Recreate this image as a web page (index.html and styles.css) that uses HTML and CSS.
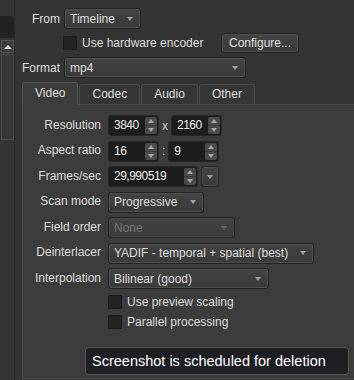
FILE: index.html
```html
<!DOCTYPE html>
<html lang="en">
<head>
  <meta charset="UTF-8" />
  <title>Render Settings</title>
  <link rel="stylesheet" href="styles.css">
</head>
<body>
  <div class="window">
    <div class="sidebar">
      <div class="sb-box"></div>
      <div class="scrollbar">
        <div class="sb-up"><i class="tri-up"></i></div>
        <div class="sb-thumb"></div>
      </div>
    </div>

    <div class="main">
      <div class="top-form">
        <span class="lbl">From</span>
        <div class="combo w-from"><span class="combo-text">Timeline</span><i class="arrow"></i></div>

        <span></span>
        <div class="check-row">
          <span class="check"></span>
          <span class="hw-label">Use hardware encoder</span>
          <button class="btn">Configure...</button>
        </div>

        <span class="lbl">Format</span>
        <div class="combo w-format"><span class="combo-text">mp4</span><i class="arrow"></i></div>
      </div>

      <div class="tabs">
        <div class="tab active">Video</div>
        <div class="tab">Codec</div>
        <div class="tab">Audio</div>
        <div class="tab">Other</div>
      </div>

      <div class="pane">
        <div class="form">
          <span class="lbl">Resolution</span>
          <div class="pair">
            <div class="spin"><span class="val">3840</span><span class="spin-btns"><i class="up"></i><i class="down"></i></span></div>
            <span class="sep">x</span>
            <div class="spin"><span class="val">2160</span><span class="spin-btns"><i class="up"></i><i class="down"></i></span></div>
          </div>

          <span class="lbl">Aspect ratio</span>
          <div class="pair">
            <div class="spin"><span class="val">16</span><span class="spin-btns"><i class="up"></i><i class="down"></i></span></div>
            <span class="sep">:</span>
            <div class="spin"><span class="val">9</span><span class="spin-btns"><i class="up"></i><i class="down"></i></span></div>
          </div>

          <span class="lbl">Frames/sec</span>
          <div class="pair">
            <div class="spin w-fps"><span class="val">29,990519</span><span class="spin-btns"><i class="up"></i><i class="down"></i></span></div>
            <div class="combo drop"><i class="arrow"></i></div>
          </div>

          <span class="lbl">Scan mode</span>
          <div class="combo w-scan"><span class="combo-text">Progressive</span><i class="arrow"></i></div>

          <span class="lbl">Field order</span>
          <div class="combo disabled w-field"><span class="combo-text">None</span><i class="arrow"></i></div>

          <span class="lbl">Deinterlacer</span>
          <div class="combo w-deint"><span class="combo-text">YADIF - temporal + spatial (best)</span><i class="arrow"></i></div>

          <span class="lbl">Interpolation</span>
          <div class="combo w-interp"><span class="combo-text">Bilinear (good)</span><i class="arrow"></i></div>

          <div class="check-line"><span class="check"></span><span>Use preview scaling</span></div>
          <div class="check-line"><span class="check"></span><span>Parallel processing</span></div>
        </div>
      </div>
    </div>

    <div class="tooltip">Screenshot is scheduled for deletion</div>
  </div>
</body>
</html>
```

FILE: styles.css
```css
* {
  box-sizing: border-box;
}

body {
  margin: 0;
  width: 354px;
  height: 380px;
  overflow: hidden;
  background-color: #343434;
  color: #dedede;
  font-family: "Liberation Sans", Arial, sans-serif;
  font-size: 12px;
}

.window {
  position: relative;
  display: flex;
  height: 380px;
}

/* left scroll strip */
.sidebar {
  width: 15px;
  flex-shrink: 0;
  border-right: 1px solid #2a2a2a;
}

.sb-box {
  margin-top: 16px;
  width: 14px;
  height: 22px;
  background-color: #222;
  border-radius: 0 3px 3px 0;
}

.scrollbar {
  margin: 2px 0 0 1px;
  width: 13px;
}

.sb-up {
  height: 13px;
  border: 1px solid #555;
  background-color: #3b3b3b;
  display: flex;
  align-items: center;
  justify-content: center;
}

.tri-up {
  border-left: 4px solid transparent;
  border-right: 4px solid transparent;
  border-bottom: 4px solid #ddd;
}

.sb-thumb {
  margin-top: 1px;
  height: 86px;
  border: 1px solid #4a4a4a;
  background-color: #383838;
}

.main {
  flex: 1;
  min-width: 0;
  display: flex;
  flex-direction: column;
}

/* top form */
.top-form {
  display: grid;
  grid-template-columns: 45px 1fr;
  column-gap: 4px;
  row-gap: 4px;
  padding-top: 8px;
  align-items: center;
  justify-items: start;
}

.lbl {
  justify-self: end;
  white-space: nowrap;
}

.check-row {
  display: flex;
  align-items: center;
  height: 20px;
  margin-left: -1px;
}

.check {
  width: 14px;
  height: 14px;
  flex-shrink: 0;
  background-color: #232323;
  border: 1px solid #1b1b1b;
  border-radius: 1px;
}

.hw-label {
  width: 139px;
  margin-left: 5px;
}

.btn {
  width: 78px;
  height: 20px;
  padding: 0;
  font: inherit;
  color: #e0e0e0;
  border: 1px solid #222;
  border-radius: 3px;
  background: linear-gradient(#444, #393939);
  box-shadow: inset 0 0 0 1px #505050;
}

.combo {
  display: flex;
  align-items: center;
  height: 21px;
  padding: 0 7px 0 5px;
  border: 1px solid #222;
  border-radius: 3px;
  background: linear-gradient(#434343, #393939);
  box-shadow: inset 0 0 0 1px #505050;
}

.combo-text {
  flex: 1;
  overflow: hidden;
  white-space: nowrap;
}

.arrow {
  flex-shrink: 0;
  margin-left: 6px;
  border-left: 3.5px solid transparent;
  border-right: 3.5px solid transparent;
  border-top: 4px solid #a0a0a0;
}

.combo.disabled {
  color: #777;
  box-shadow: inset 0 0 0 1px #474747;
}

.combo.disabled .arrow {
  border-top-color: #666;
}

.w-from { width: 77px; }
.w-format { width: 182px; }
.w-scan { width: 96px; }
.w-field { width: 127px; }
.w-deint { width: 206px; }
.w-interp { width: 161px; }

/* tabs */
.tabs {
  display: flex;
  align-items: flex-end;
  gap: 1px;
  margin: 4px 0 0 7px;
}

.tab {
  height: 20px;
  padding: 0 12px 1px;
  display: flex;
  align-items: center;
  justify-content: center;
  border: 1px solid #4a4a4a;
  border-bottom: none;
  border-radius: 3px 3px 0 0;
  background-color: #363636;
}

.tab.active {
  position: relative;
  height: 23px;
  padding-bottom: 3px;
  margin-bottom: -1px;
  border-color: #555;
  background-color: #3c3c3c;
}

.pane {
  flex: 1;
  margin: 0 -3px 1px 7px;
  border: 1px solid #4d4d4d;
  background-color: #3c3c3c;
}

.form {
  display: grid;
  grid-template-columns: 78px 1fr;
  column-gap: 7px;
  row-gap: 4.5px;
  padding-top: 10px;
  align-items: center;
  justify-items: start;
}

.form > * {
  min-height: 16px;
}

.pair {
  display: flex;
  align-items: center;
  gap: 3px;
}

.sep {
  color: #d0d0d0;
}

.spin {
  display: flex;
  width: 51px;
  height: 21px;
  border: 1px solid #262626;
  border-radius: 3px;
  background-color: #1d1d1d;
}

.spin .val {
  flex: 1;
  padding-left: 5px;
  line-height: 19px;
  color: #eee;
  letter-spacing: -0.5px;
}

.spin-btns {
  width: 12px;
  margin: 1px;
  border-radius: 2px;
  background-color: #4a4a4a;
  display: flex;
  flex-direction: column;
}

.spin-btns i {
  flex: 1;
  display: flex;
  align-items: center;
  justify-content: center;
}

.spin-btns .up {
  border-bottom: 1px solid #3b3b3b;
}

.spin-btns .up::before {
  content: "";
  border-left: 3.5px solid transparent;
  border-right: 3.5px solid transparent;
  border-bottom: 4px solid #a8a8a8;
}

.spin-btns .down::before {
  content: "";
  border-left: 3.5px solid transparent;
  border-right: 3.5px solid transparent;
  border-top: 4px solid #a8a8a8;
}

.w-fps {
  width: 90px;
}

.combo.drop {
  width: 18px;
  padding: 0;
  justify-content: center;
}

.combo.drop .arrow {
  margin-left: 0;
}

.check-line {
  grid-column: 2;
  display: flex;
  align-items: center;
  gap: 5px;
  height: 16px;
}

/* tooltip over the form */
.tooltip {
  position: absolute;
  left: 85px;
  top: 347px;
  width: 264px;
  height: 28px;
  padding-left: 6px;
  display: flex;
  align-items: center;
  background-color: #1d1f23;
  border: 1px solid #565656;
  border-radius: 4px;
  color: #fff;
  font-size: 14.5px;
}
```
